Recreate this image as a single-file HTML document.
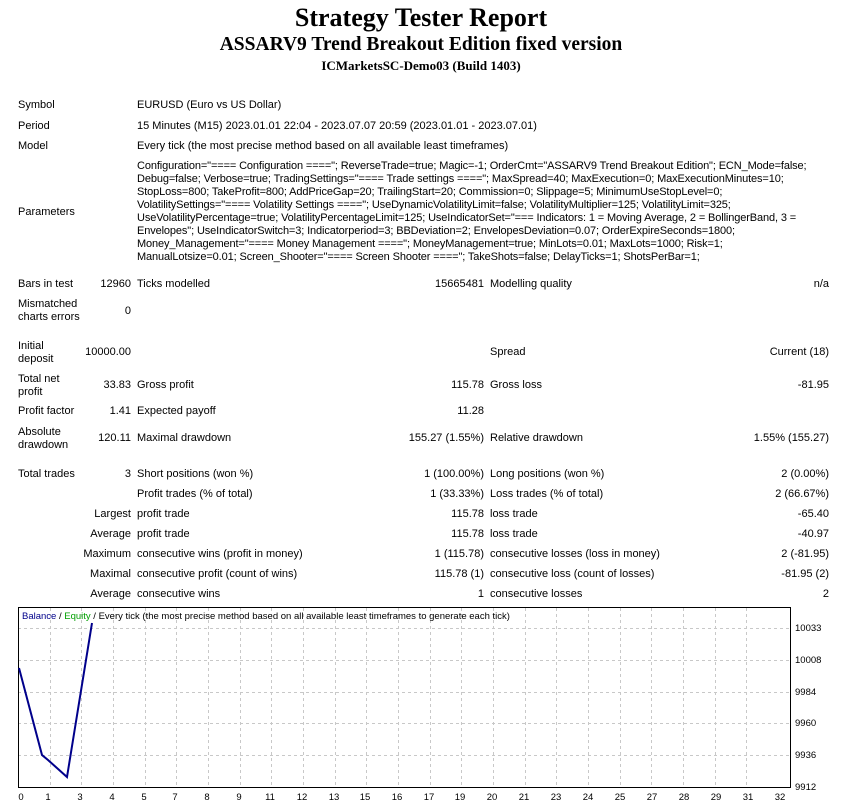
<!DOCTYPE html>
<html><head><meta charset="utf-8"><style>
body{margin:0;width:842px;height:805px;background:#fff;position:relative;overflow:hidden;font-family:"Liberation Sans",sans-serif;font-size:11px;color:#000}
.t{position:absolute;white-space:nowrap;line-height:13px}
.p{letter-spacing:-0.12px}
.h{position:absolute;left:0;width:842px;text-align:center;font-family:"Liberation Serif",serif;font-weight:bold;white-space:nowrap}
.r{text-align:right}
</style></head><body>
<div class="h" style="top:3px;font-size:26px">Strategy Tester Report</div>
<div class="h" style="top:34px;font-size:19.5px">ASSARV9 Trend Breakout Edition fixed version</div>
<div class="h" style="top:58px;font-size:13px">ICMarketsSC-Demo03 (Build 1403)</div>

<div class="t" style="left:18px;top:99px">Symbol</div>
<div class="t" style="left:137px;top:99px">EURUSD (Euro vs US Dollar)</div>
<div class="t" style="left:18px;top:120px">Period</div>
<div class="t" style="left:137px;top:120px">15 Minutes (M15) 2023.01.01 22:04 - 2023.07.07 20:59 (2023.01.01 - 2023.07.01)</div>
<div class="t" style="left:18px;top:140px">Model</div>
<div class="t" style="left:137px;top:140px">Every tick (the most precise method based on all available least timeframes)</div>
<div class="t" style="left:18px;top:206px">Parameters</div>
<div class="t p" style="left:137px;top:160px">Configuration="==== Configuration ===="; ReverseTrade=true; Magic=-1; OrderCmt="ASSARV9 Trend Breakout Edition"; ECN_Mode=false;</div>
<div class="t p" style="left:137px;top:173px">Debug=false; Verbose=true; TradingSettings="==== Trade settings ===="; MaxSpread=40; MaxExecution=0; MaxExecutionMinutes=10;</div>
<div class="t p" style="left:137px;top:186px">StopLoss=800; TakeProfit=800; AddPriceGap=20; TrailingStart=20; Commission=0; Slippage=5; MinimumUseStopLevel=0;</div>
<div class="t p" style="left:137px;top:199px">VolatilitySettings="==== Volatility Settings ===="; UseDynamicVolatilityLimit=false; VolatilityMultiplier=125; VolatilityLimit=325;</div>
<div class="t p" style="left:137px;top:212px">UseVolatilityPercentage=true; VolatilityPercentageLimit=125; UseIndicatorSet="=== Indicators: 1 = Moving Average, 2 = BollingerBand, 3 =</div>
<div class="t p" style="left:137px;top:225px">Envelopes"; UseIndicatorSwitch=3; Indicatorperiod=3; BBDeviation=2; EnvelopesDeviation=0.07; OrderExpireSeconds=1800;</div>
<div class="t p" style="left:137px;top:238px">Money_Management="==== Money Management ===="; MoneyManagement=true; MinLots=0.01; MaxLots=1000; Risk=1;</div>
<div class="t p" style="left:137px;top:251px">ManualLotsize=0.01; Screen_Shooter="==== Screen Shooter ===="; TakeShots=false; DelayTicks=1; ShotsPerBar=1;</div>

<div class="t" style="left:18px;top:278px">Bars in test</div>
<div class="t r" style="right:711px;top:278px">12960</div>
<div class="t" style="left:137px;top:278px">Ticks modelled</div>
<div class="t r" style="right:358px;top:278px">15665481</div>
<div class="t" style="left:490px;top:278px">Modelling quality</div>
<div class="t r" style="right:13px;top:278px">n/a</div>
<div class="t" style="left:18px;top:298px">Mismatched<br>charts errors</div>
<div class="t r" style="right:711px;top:305px">0</div>

<div class="t" style="left:18px;top:340px">Initial<br>deposit</div>
<div class="t r" style="right:711px;top:346px">10000.00</div>
<div class="t" style="left:490px;top:346px">Spread</div>
<div class="t r" style="right:13px;top:346px">Current (18)</div>
<div class="t" style="left:18px;top:373px">Total net<br>profit</div>
<div class="t r" style="right:711px;top:379px">33.83</div>
<div class="t" style="left:137px;top:379px">Gross profit</div>
<div class="t r" style="right:358px;top:379px">115.78</div>
<div class="t" style="left:490px;top:379px">Gross loss</div>
<div class="t r" style="right:13px;top:379px">-81.95</div>
<div class="t" style="left:18px;top:405px">Profit factor</div>
<div class="t r" style="right:711px;top:405px">1.41</div>
<div class="t" style="left:137px;top:405px">Expected payoff</div>
<div class="t r" style="right:358px;top:405px">11.28</div>
<div class="t" style="left:18px;top:426px">Absolute<br>drawdown</div>
<div class="t r" style="right:711px;top:432px">120.11</div>
<div class="t" style="left:137px;top:432px">Maximal drawdown</div>
<div class="t r" style="right:358px;top:432px">155.27 (1.55%)</div>
<div class="t" style="left:490px;top:432px">Relative drawdown</div>
<div class="t r" style="right:13px;top:432px">1.55% (155.27)</div>

<div class="t" style="left:18px;top:468px">Total trades</div>
<div class="t r" style="right:711px;top:468px">3</div>
<div class="t" style="left:137px;top:468px">Short positions (won %)</div>
<div class="t r" style="right:358px;top:468px">1 (100.00%)</div>
<div class="t" style="left:490px;top:468px">Long positions (won %)</div>
<div class="t r" style="right:13px;top:468px">2 (0.00%)</div>

<div class="t" style="left:137px;top:488px">Profit trades (% of total)</div>
<div class="t r" style="right:358px;top:488px">1 (33.33%)</div>
<div class="t" style="left:490px;top:488px">Loss trades (% of total)</div>
<div class="t r" style="right:13px;top:488px">2 (66.67%)</div>

<div class="t r" style="right:711px;top:508px">Largest</div>
<div class="t" style="left:137px;top:508px">profit trade</div>
<div class="t r" style="right:358px;top:508px">115.78</div>
<div class="t" style="left:490px;top:508px">loss trade</div>
<div class="t r" style="right:13px;top:508px">-65.40</div>

<div class="t r" style="right:711px;top:528px">Average</div>
<div class="t" style="left:137px;top:528px">profit trade</div>
<div class="t r" style="right:358px;top:528px">115.78</div>
<div class="t" style="left:490px;top:528px">loss trade</div>
<div class="t r" style="right:13px;top:528px">-40.97</div>

<div class="t r" style="right:711px;top:548px">Maximum</div>
<div class="t" style="left:137px;top:548px">consecutive wins (profit in money)</div>
<div class="t r" style="right:358px;top:548px">1 (115.78)</div>
<div class="t" style="left:490px;top:548px">consecutive losses (loss in money)</div>
<div class="t r" style="right:13px;top:548px">2 (-81.95)</div>

<div class="t r" style="right:711px;top:568px">Maximal</div>
<div class="t" style="left:137px;top:568px">consecutive profit (count of wins)</div>
<div class="t r" style="right:358px;top:568px">115.78 (1)</div>
<div class="t" style="left:490px;top:568px">consecutive loss (count of losses)</div>
<div class="t r" style="right:13px;top:568px">-81.95 (2)</div>

<div class="t r" style="right:711px;top:588px">Average</div>
<div class="t" style="left:137px;top:588px">consecutive wins</div>
<div class="t r" style="right:358px;top:588px">1</div>
<div class="t" style="left:490px;top:588px">consecutive losses</div>
<div class="t r" style="right:13px;top:588px">2</div>

<svg style="position:absolute;left:0;top:600px" width="842" height="205" font-family="Liberation Sans, sans-serif" font-size="9">
<g stroke="#c8c8c8" stroke-dasharray="3,3" stroke-width="1">
<line x1="18" x2="790" y1="28.5" y2="28.5"/><line x1="18" x2="790" y1="60.5" y2="60.5"/><line x1="18" x2="790" y1="92.5" y2="92.5"/><line x1="18" x2="790" y1="123.5" y2="123.5"/><line x1="18" x2="790" y1="155.5" y2="155.5"/>
<line x1="50.5" x2="50.5" y1="8" y2="187"/><line x1="81.5" x2="81.5" y1="8" y2="187"/><line x1="113.5" x2="113.5" y1="8" y2="187"/><line x1="145.5" x2="145.5" y1="8" y2="187"/><line x1="176.5" x2="176.5" y1="8" y2="187"/><line x1="208.5" x2="208.5" y1="8" y2="187"/><line x1="240.5" x2="240.5" y1="8" y2="187"/><line x1="271.5" x2="271.5" y1="8" y2="187"/><line x1="303.5" x2="303.5" y1="8" y2="187"/><line x1="335.5" x2="335.5" y1="8" y2="187"/><line x1="366.5" x2="366.5" y1="8" y2="187"/><line x1="398.5" x2="398.5" y1="8" y2="187"/><line x1="430.5" x2="430.5" y1="8" y2="187"/><line x1="461.5" x2="461.5" y1="8" y2="187"/><line x1="493.5" x2="493.5" y1="8" y2="187"/><line x1="525.5" x2="525.5" y1="8" y2="187"/><line x1="556.5" x2="556.5" y1="8" y2="187"/><line x1="588.5" x2="588.5" y1="8" y2="187"/><line x1="620.5" x2="620.5" y1="8" y2="187"/><line x1="651.5" x2="651.5" y1="8" y2="187"/><line x1="683.5" x2="683.5" y1="8" y2="187"/><line x1="715.5" x2="715.5" y1="8" y2="187"/><line x1="746.5" x2="746.5" y1="8" y2="187"/>
</g>
<rect x="18.5" y="7.5" width="772" height="180" fill="none" stroke="#000"/>
<polyline points="19,68 42,155 48,160 67,177 92,23" fill="none" stroke="#00008b" stroke-width="2"/>
<text x="22" y="19" font-size="9.5"><tspan fill="#00008b">Balance</tspan> / <tspan fill="#00a000">Equity</tspan> / Every tick (the most precise method based on all available least timeframes to generate each tick)</text>
<g font-size="9.5">
<text x="795" y="31">10033</text><text x="795" y="63">10008</text><text x="795" y="95">9984</text><text x="795" y="126">9960</text><text x="795" y="158">9936</text><text x="795" y="190">9912</text>
</g>
<g font-size="9.5" text-anchor="middle">
<text x="21" y="200">0</text><text x="48" y="200">1</text><text x="80" y="200">3</text><text x="112" y="200">4</text><text x="144" y="200">5</text><text x="175" y="200">7</text><text x="207" y="200">8</text><text x="239" y="200">9</text><text x="270" y="200">11</text><text x="302" y="200">12</text><text x="334" y="200">13</text><text x="365" y="200">15</text><text x="397" y="200">16</text><text x="429" y="200">17</text><text x="460" y="200">19</text><text x="492" y="200">20</text><text x="524" y="200">21</text><text x="556" y="200">23</text><text x="588" y="200">24</text><text x="620" y="200">25</text><text x="652" y="200">27</text><text x="684" y="200">28</text><text x="716" y="200">29</text><text x="748" y="200">31</text><text x="780" y="200">32</text>
</g>
</svg>
</body></html>
